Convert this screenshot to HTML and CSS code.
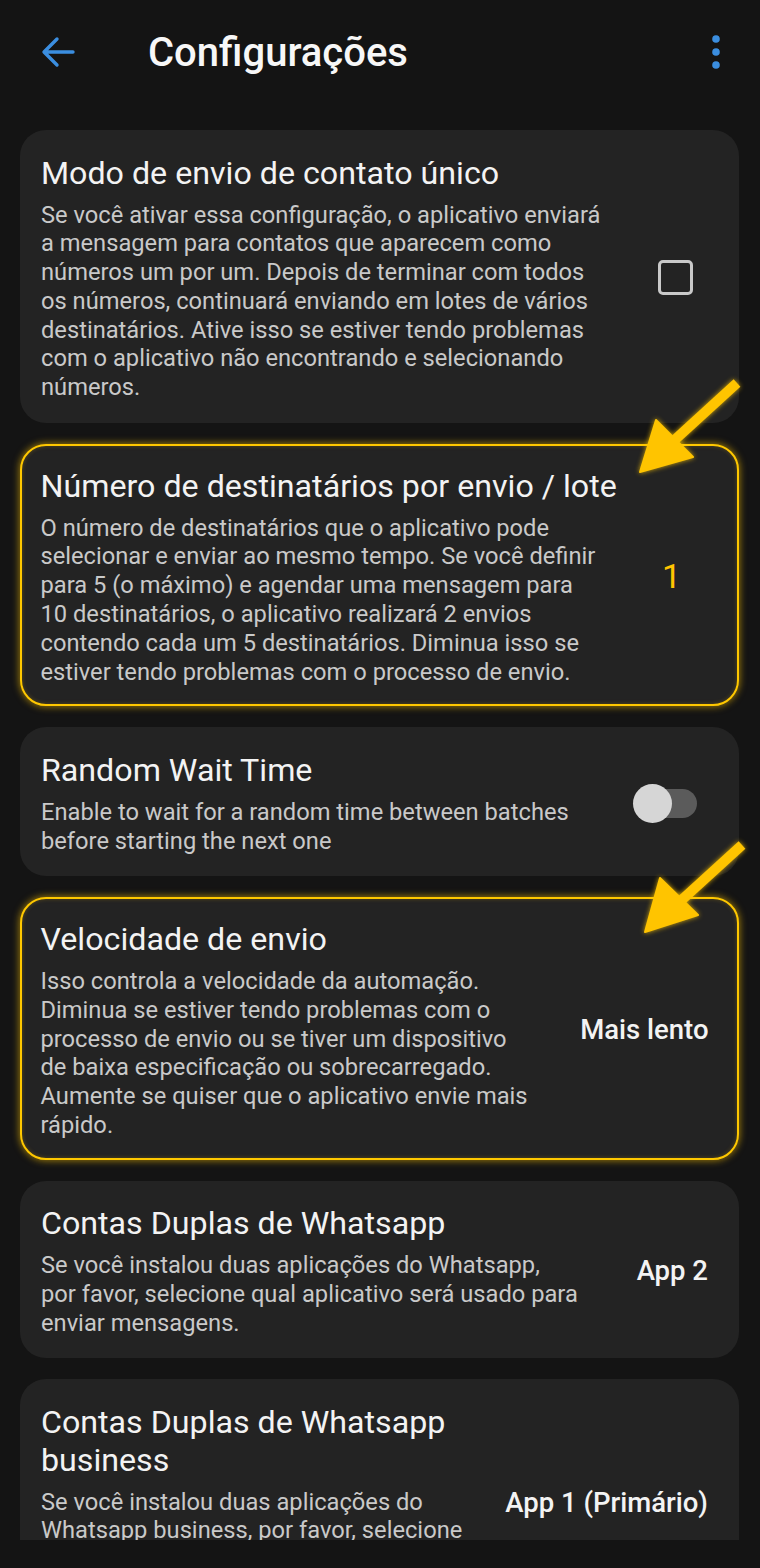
FILE: index.html
```html
<!DOCTYPE html>
<html lang="pt-BR">
<head>
<meta charset="utf-8">
<title>Configurações</title>
<link rel="stylesheet" href="styles.css">
</head>
<body>
<div class="screen">
  <header class="appbar">
    <button class="icon-btn back" aria-label="Voltar">
      <svg width="36" height="32" viewBox="0 0 36 32"><path d="M33 16H5M17 3L4 16l13 13" fill="none" stroke="#3b8ee0" stroke-width="3.4" stroke-linecap="round" stroke-linejoin="round"/></svg>
    </button>
    <h1 class="appbar-title">Configurações</h1>
    <button class="icon-btn more" aria-label="Mais opções">
      <svg width="10" height="34" viewBox="0 0 10 34"><circle cx="5" cy="4" r="3.8" fill="#3b8ee0"/><circle cx="5" cy="17" r="3.8" fill="#3b8ee0"/><circle cx="5" cy="30" r="3.8" fill="#3b8ee0"/></svg>
    </button>
  </header>

  <main class="list">
    <section class="card">
      <div class="text">
        <h2 class="title">Modo de envio de contato único</h2>
        <p class="desc">Se você ativar essa configuração, o aplicativo enviará a mensagem para contatos que aparecem como números um por um. Depois de terminar com todos os números, continuará enviando em lotes de vários destinatários. Ative isso se estiver tendo problemas com o aplicativo não encontrando e selecionando números.</p>
      </div>
      <div class="widget"><span class="checkbox"></span></div>
    </section>

    <section class="card card--highlight">
      <div class="text">
        <h2 class="title">Número de destinatários por envio / lote</h2>
        <p class="desc">O número de destinatários que o aplicativo pode selecionar e enviar ao mesmo tempo. Se você definir para 5 (o máximo) e agendar uma mensagem para 10 destinatários, o aplicativo realizará 2 envios contendo cada um 5 destinatários. Diminua isso se estiver tendo problemas com o processo de envio.</p>
      </div>
      <div class="widget"><span class="number">1</span></div>
    </section>

    <section class="card">
      <div class="text">
        <h2 class="title">Random Wait Time</h2>
        <p class="desc">Enable to wait for a random time between batches before starting the next one</p>
      </div>
      <div class="widget widget--switch"><span class="switch"><span class="thumb"></span></span></div>
    </section>

    <section class="card card--highlight">
      <div class="text">
        <h2 class="title">Velocidade de envio</h2>
        <p class="desc">Isso controla a velocidade da automação. Diminua se estiver tendo problemas com o processo de envio ou se tiver um dispositivo de baixa especificação ou sobrecarregado. Aumente se quiser que o aplicativo envie mais rápido.</p>
      </div>
      <div class="value">Mais lento</div>
    </section>

    <section class="card">
      <div class="text">
        <h2 class="title">Contas Duplas de Whatsapp</h2>
        <p class="desc">Se você instalou duas aplicações do Whatsapp,<br>por favor, selecione qual aplicativo será usado para enviar mensagens.</p>
      </div>
      <div class="value value--wide">App 2</div>
    </section>

    <section class="card">
      <div class="text">
        <h2 class="title">Contas Duplas de Whatsapp business</h2>
        <p class="desc">Se você instalou duas aplicações do Whatsapp business, por favor, selecione qual aplicativo será usado para enviar mensagens.</p>
      </div>
      <div class="value value--tight">App 1 (Primário)</div>
    </section>
  </main>

  <div class="bottom-gap"></div>

  <svg class="annotations" width="760" height="1568" viewBox="0 0 760 1568" aria-hidden="true">
    <g class="arrow">
      <line x1="737" y1="383" x2="668" y2="446"/>
      <polygon points="640,472 656,420 693,457"/>
    </g>
    <g class="arrow">
      <line x1="742" y1="845" x2="674" y2="907"/>
      <polygon points="645,932 660,878 698,915"/>
    </g>
  </svg>
</div>
</body>
</html>
```

FILE: styles.css
```css
* { box-sizing: border-box; }

html, body {
  margin: 0;
  padding: 0;
  background: #141414;
}

body {
  font-family: Roboto, "Noto Sans", "Liberation Sans", sans-serif;
  color: #f1f1f1;
}

.screen {
  position: relative;
  width: 760px;
  height: 1568px;
  display: flex;
  flex-direction: column;
  overflow: hidden;
  background: #141414;
}

.appbar {
  height: 130px;
  flex: none;
  display: flex;
  align-items: center;
  padding: 0 0 26px 0;
}

.icon-btn {
  background: none;
  border: 0;
  padding: 0;
  display: flex;
  align-items: center;
  justify-content: center;
}

.back {
  width: 36px;
  height: 32px;
  margin-left: 40px;
}

.appbar-title {
  margin: 0 0 0 72px;
  font-size: 40px;
  font-weight: 500;
  color: #f7f7f7;
  letter-spacing: 0;
  flex: 1;
}

.more {
  width: 10px;
  height: 34px;
  margin-right: 39px;
}

.list {
  flex: 1;
  overflow: hidden;
  padding: 0 21px 0 20px;
  display: flex;
  flex-direction: column;
  gap: 21px;
}

.bottom-gap {
  height: 28px;
  flex: none;
}

.card {
  flex: none;
  display: flex;
  align-items: center;
  background: #232323;
  border-radius: 26px;
  padding: 23.5px 31px 20.5px 21px;
}

.card--highlight {
  border: 2.5px solid #ffc800;
  padding: 21px 28.5px 18px 18.5px;
  box-shadow: 0 0 7px 1px rgba(255, 196, 0, 0.55), inset 0 0 4px rgba(255, 196, 0, 0.25);
}

.text {
  flex: 1;
  min-width: 0;
}

.title {
  margin: 0 -16px 9px 0;
  font-size: 32.2px;
  line-height: 38px;
  font-weight: 400;
  color: #f3f3f3;
}

.desc {
  margin: 0;
  font-size: 23.7px;
  line-height: 28.8px;
  color: #c9c9c9;
}

.widget {
  flex: none;
  width: 64px;
  margin-left: 41px;
  display: flex;
  justify-content: center;
  align-items: center;
}

.widget--switch {
  width: 64px;
  margin-right: 11px;
}

.checkbox {
  width: 35px;
  height: 35px;
  border: 3.5px solid #c9c9c9;
  border-radius: 5px;
  margin-left: -2px;
}

.number {
  font-size: 34px;
  color: #ffc400;
  margin-left: -10px;
}

.switch {
  position: relative;
  width: 63px;
  height: 29px;
  border-radius: 15px;
  background: #5b5b5b;
  display: flex;
  align-items: center;
}

.thumb {
  width: 39px;
  height: 39px;
  border-radius: 50%;
  background: #d6d6d6;
  margin-left: -1px;
}

.value {
  flex: none;
  margin-left: 52px;
  font-size: 27.5px;
  font-weight: 500;
  color: #f3f3f3;
}

.value--wide {
  margin-left: 53px;
}

.value--tight {
  margin-left: 36px;
}

.annotations {
  position: absolute;
  left: 0;
  top: 0;
  pointer-events: none;
}

.arrow {
  filter: drop-shadow(0 0 2.5px rgba(255, 200, 0, 0.8));
}

.arrow line {
  stroke: #ffc400;
  stroke-width: 10;
}

.arrow polygon {
  fill: #ffc400;
  stroke: #ffc400;
  stroke-width: 2;
  stroke-linejoin: round;
}
```
